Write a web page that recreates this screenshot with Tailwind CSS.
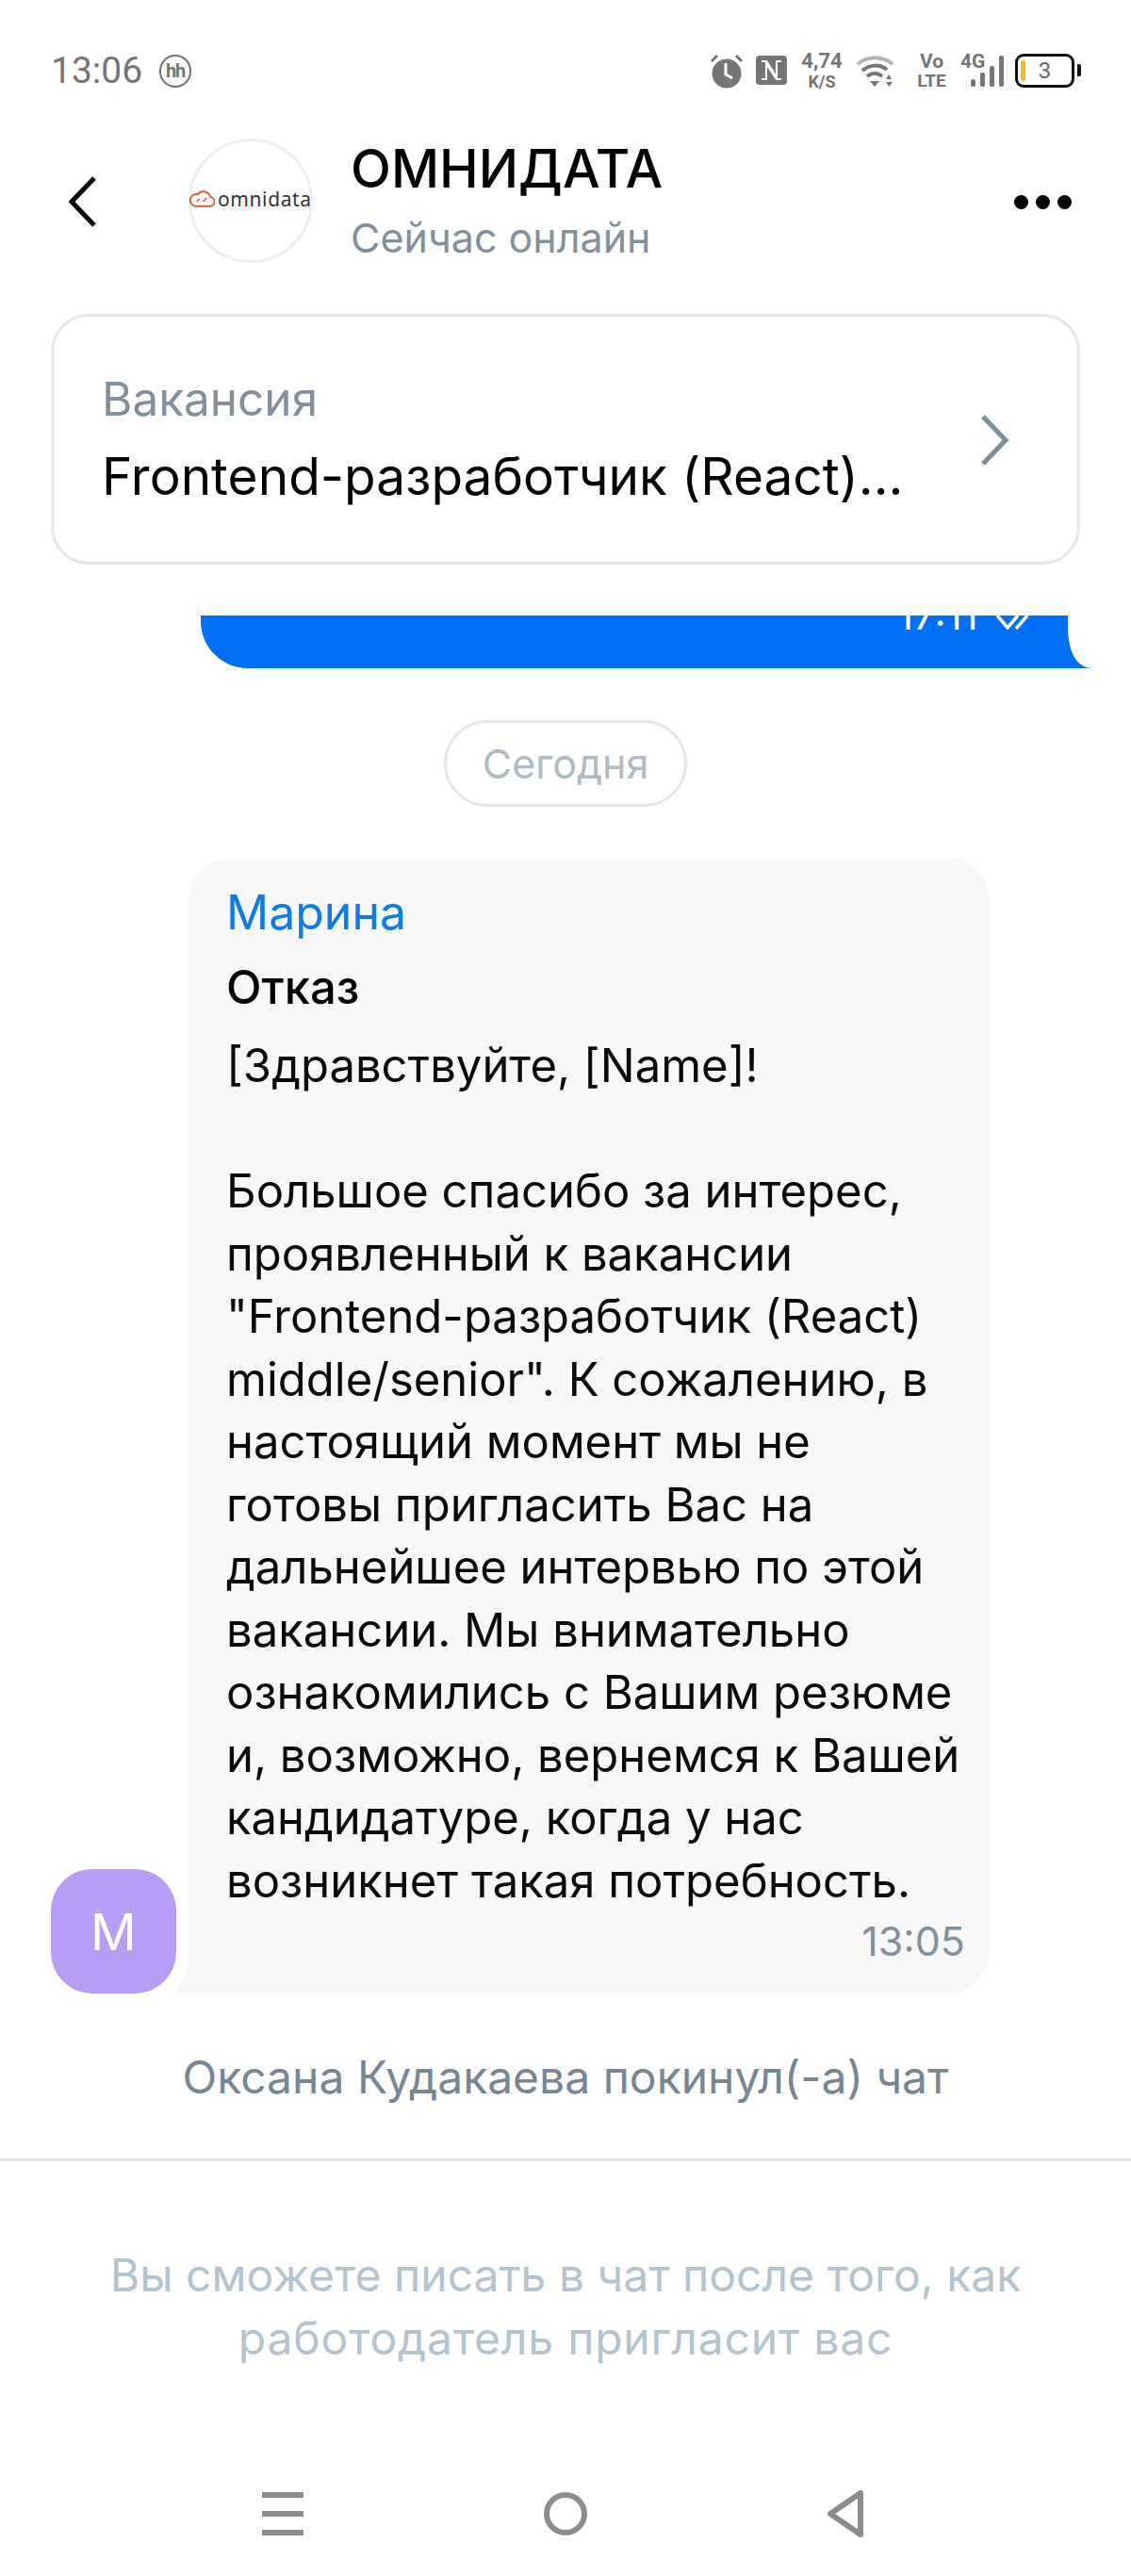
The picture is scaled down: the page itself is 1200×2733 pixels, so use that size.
<!DOCTYPE html>
<html lang="ru">
<head>
<meta charset="utf-8">
<script src="https://cdn.jsdelivr.net/npm/@tailwindcss/browser@4"></script>
</head>
<body class="bg-white">
<div class="w-[1200px] h-[2733px] overflow-hidden flex flex-col bg-white font-['Inter','Liberation_Sans',sans-serif] text-black">
  <!-- status bar -->
  <div class="h-[110px] shrink-0 pl-[54px] pr-[53px] pt-[55px] flex items-start justify-between text-[#757575]">
    <div class="flex items-center h-[40px] gap-[18px] font-['Roboto',sans-serif]">
      <span class="text-[39px] leading-[40px]">13:06</span>
      <span class="w-[34px] h-[35px] rounded-full border-[2px] border-[#757575] flex items-center justify-center text-[20px] font-bold leading-none tracking-[-1px]">hh</span>
    </div>
    <div class="flex items-start h-[40px] font-['Roboto',sans-serif]">
      <svg class="w-[36px] h-[38px] mt-[1px]" viewBox="0 0 36 38"><circle cx="18" cy="22" r="15.500" fill="#757575"/><path d="M17 11v12l7 4" stroke="#fff" stroke-width="3" fill="none"/><path d="M2 9l6-6M34 9l-6-6" stroke="#757575" stroke-width="3"/></svg>
      <svg class="w-[33px] h-[31px] ml-[13px] mt-[4px]" viewBox="0 0 33 31"><rect width="33" height="31" rx="4" fill="#757575"/><path d="M6 6h5v19H6M27 25h-5V6h5" stroke="#fff" stroke-width="2" fill="none"/><path d="M11 7l11 17" stroke="#fff" stroke-width="3.500" fill="none"/></svg>
      <div class="w-[44px] ml-[15px] flex flex-col items-center font-bold">
        <span class="text-[22px] leading-[20px] mt-[0px]">4,74</span>
        <span class="text-[18px] leading-[18px] mt-[3px]">K/S</span>
      </div>
      <svg class="w-[41px] h-[36px] ml-[14px] mt-[2px]" viewBox="0 0 41 36"><path d="M2 11C13 2 28 2 39 11" stroke="#b5b5b5" stroke-width="4" fill="none"/><path d="M7 18C15 11 26 11 33 17" stroke="#757575" stroke-width="4" fill="none"/><path d="M12 24C17 20 23 20 28 24" stroke="#757575" stroke-width="4" fill="none"/><path d="M15 29h10l-5 6z" fill="#757575"/><path d="M32 27l3-5 3 5zM32 30h7l-3.500 5z" fill="#757575"/></svg>
      <div class="w-[33px] ml-[23px] flex flex-col items-center font-bold leading-none">
        <span class="text-[21px] leading-[20px]">Vo</span>
        <span class="text-[19px] leading-[18px] mt-[2px]">LTE</span>
      </div>
      <div class="relative w-[47px] h-[38px] ml-[14px]">
        <span class="absolute left-0 top-[0px] text-[21px] leading-[20px] font-bold">4G</span>
        <svg class="absolute left-0 top-0 w-[47px] h-[38px]" viewBox="0 0 47 38"><rect x="11" y="29" width="5" height="8" rx="2.500" fill="#757575"/><rect x="21" y="22" width="5" height="15" rx="2" fill="#757575"/><rect x="31" y="15" width="5" height="22" rx="2" fill="#757575"/><rect x="41" y="4" width="5" height="33" rx="2" fill="#757575"/></svg>
      </div>
      <div class="relative w-[63px] h-[36px] ml-[11px] mt-[2px] border-[3px] border-[#111] rounded-[9px] flex items-center justify-center text-[24px] leading-none text-[#666]">
        <span class="absolute left-[3px] top-[4px] w-[5px] h-[22px] rounded-full bg-[#f5b914]"></span>
        <span>3</span>
        <span class="absolute right-[-10px] top-[8px] w-[4px] h-[13px] rounded-r-[2px] bg-[#111]"></span>
      </div>
      <span class="w-[7px]"></span>
    </div>
  </div>

  <!-- header -->
  <div class="h-[223px] shrink-0 relative flex items-start">
    <svg class="w-[34px] h-[56px] ml-[71px] mt-[76px] shrink-0" viewBox="0 0 34 56"><path d="M29 3L5 28l24 25" stroke="#000" stroke-width="5" fill="none"/></svg>
    <div class="w-[132px] h-[132px] ml-[95px] mt-[37px] rounded-full border-[3px] border-[#eeeeee] relative shrink-0">
      <div class="absolute left-[-2px] top-[50px] flex items-center whitespace-nowrap">
        <svg class="w-[27px] h-[20px] shrink-0" viewBox="0 0 28 20"><path d="M6 18h16a5 5 0 0 0 1-10A8 8 0 0 0 9 5 6.500 6.500 0 0 0 6 18z" stroke="#dd5a37" stroke-width="2" fill="none"/><path d="M8 13l3-3M15 13l4-4" stroke="#dd5a37" stroke-width="1.500"/></svg>
        <span class="text-[21px] leading-[22px] text-[#333] ml-[3px] tracking-[0.6px] font-['Noto_Sans',sans-serif]">omnidata</span>
      </div>
    </div>
    <div class="ml-[40px] mt-[35px] shrink-0">
      <div class="text-[56px] leading-[68px] font-medium whitespace-nowrap">ОМНИДАТА</div>
      <div class="text-[43px] leading-[56px] mt-[11px] text-[#82909d] whitespace-nowrap">Сейчас онлайн</div>
    </div>
    <div class="absolute left-[1076px] top-[97px] flex gap-[8px]">
      <span class="w-[15px] h-[15px] rounded-full bg-black"></span>
      <span class="w-[15px] h-[15px] rounded-full bg-black"></span>
      <span class="w-[15px] h-[15px] rounded-full bg-black"></span>
    </div>
  </div>

  <!-- vacancy card -->
  <div class="shrink-0 mx-[54px] h-[266px] rounded-[40px] border-[3px] border-[#e3e7ea] px-[51px] pt-[58px] relative">
    <div class="text-[49.500px] leading-[58px] text-[#82909d] whitespace-nowrap">Вакансия</div>
    <div class="text-[55px] leading-[64px] mt-[21px] whitespace-nowrap">Frontend-разработчик (React)...</div>
    <svg class="absolute left-[981px] top-[103px] w-[34px] h-[56px]" viewBox="0 0 34 56"><path d="M5 3l24 25L5 53" stroke="#7e8d9a" stroke-width="5" fill="none"/></svg>
  </div>

  <!-- chat area -->
  <div class="shrink-0 h-[1637px] mt-[54px] flex flex-col">
    <div class="relative h-[56px] ml-[213px] w-[920px] bg-[#0070f6] rounded-bl-[50px] shrink-0">
      <div class="h-[15px] w-[145px] overflow-hidden absolute left-[739px] top-0">
        <span class="absolute left-0 top-[-20px] text-[42px] leading-[40px] text-white whitespace-nowrap">17:11</span>
        <svg class="absolute left-[104px] top-0 w-[38px] h-[15px]" viewBox="0 0 38 15"><path d="M2 0l11 13L24 0M22 14L34 0" stroke="#fff" stroke-width="3.500" fill="none"/></svg>
      </div>
      <svg class="absolute left-[920px] top-0 w-[25px] h-[56px]" viewBox="0 0 25 56"><path d="M0 0V12C0 36 8 55 25 56H0Z" fill="#0070f6"/></svg>
    </div>
    <div class="self-center mt-[55px] h-[92px] w-[258px] rounded-full border-[3px] border-[#e3e7ea] flex items-center justify-center text-[43px] text-[#aebac4] shrink-0">Сегодня</div>
    <div class="mt-[54px] flex items-end pl-[54px] shrink-0">
      <div class="relative z-10 w-[133px] h-[132px] rounded-[44px] bg-[#b79df6] ring-[4px] ring-white flex items-center justify-center text-white text-[54px] shrink-0">М</div>
      <div class="relative ml-[13px] w-[850px] h-[1205px] bg-[#f7f7f7] rounded-[44px] rounded-bl-none pl-[40px] pt-[28px]">
        <svg class="absolute left-[-20px] bottom-0 w-[20px] h-[44px]" viewBox="0 0 20 44"><path d="M20 0C20 20 14 38 0 44H20Z" fill="#f7f7f7"/></svg>
        <div class="text-[50px] leading-[60px] text-[#0a7ceb]">Марина</div>
        <div class="text-[49px] leading-[60px] mt-[20px] font-medium">Отказ</div>
        <div class="text-[49px] leading-[66.500px] mt-[20px] whitespace-nowrap text-[#0a0a0a]">[Здравствуйте, [Name]!<br><br>Большое спасибо за интерес,<br>проявленный к вакансии<br>"Frontend-разработчик (React)<br>middle/senior". К сожалению, в<br>настоящий момент мы не<br>готовы пригласить Вас на<br>дальнейшее интервью по этой<br>вакансии. Мы внимательно<br>ознакомились с Вашим резюме<br>и, возможно, вернемся к Вашей<br>кандидатуре, когда у нас<br>возникнет такая потребность.</div>
        <div class="absolute right-[26px] bottom-[31px] text-[43px] leading-[50px] text-[#82909d]">13:05</div>
      </div>
    </div>
    <div class="mt-[59px] text-center text-[48px] leading-[60px] text-[#768694] whitespace-nowrap shrink-0">Оксана Кудакаева покинул(-а) чат</div>
  </div>

  <!-- composer -->
  <div class="shrink-0 flex-1 border-t-[3px] border-[#dfe4e7] flex flex-col items-center">
    <div class="mt-[87px] text-center text-[48px] leading-[67px] text-[#b3c3d0] whitespace-nowrap">Вы сможете писать в чат после того, как<br><span class="tracking-[0.8px]">работодатель пригласит вас</span></div>
    <div class="mt-[130px] w-full relative h-[46px]">
      <div class="absolute left-[278px] top-0 w-[44px] h-[46px] flex flex-col justify-between">
        <span class="h-[6px] bg-[#8c8c8c]"></span><span class="h-[6px] bg-[#8c8c8c]"></span><span class="h-[6px] bg-[#8c8c8c]"></span>
      </div>
      <span class="absolute left-[577px] top-0 w-[46px] h-[46px] rounded-full border-[6px] border-[#8c8c8c]"></span>
      <svg class="absolute left-[876px] top-[-3px] w-[42px] h-[52px]" viewBox="0 0 42 52"><path d="M37 4v44L5 26z" stroke="#8c8c8c" stroke-width="6" stroke-linejoin="round" fill="none"/></svg>
    </div>
  </div>
</div>
</body>
</html>
